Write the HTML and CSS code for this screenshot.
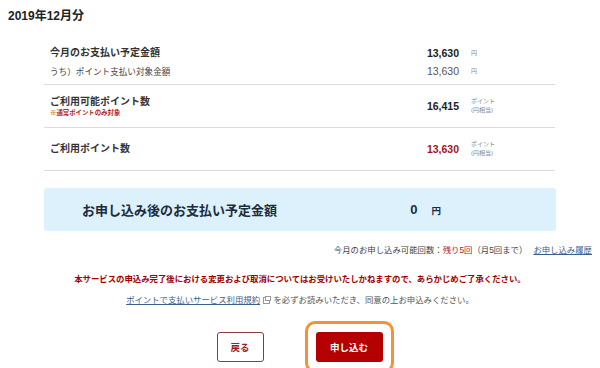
FILE: index.html
```html
<!DOCTYPE html>
<html lang="ja">
<head>
    <meta charset="UTF-8">
    <title>ポイントで支払い</title>
    <link rel="stylesheet" href="styles.css">
</head>
<body>
    <h1 class="month-title">2019年12月分</h1>

    <div class="summary">
        <div class="row row-first">
            <div class="label label-main">今月のお支払い予定金額</div>
            <div class="amount">13,630</div>
            <div class="unit">円</div>
            <div class="label label-sub">うち）ポイント支払い対象金額</div>
            <div class="amount amount-sub">13,630</div>
            <div class="unit">円</div>
        </div>
        <div class="row">
            <div class="label">
                <div class="label-main">ご利用可能ポイント数</div>
                <div class="label-note">※通常ポイントのみ対象</div>
            </div>
            <div class="amount">16,415</div>
            <div class="unit">ポイント<br>(円相当)</div>
        </div>
        <div class="row">
            <div class="label label-main">ご利用ポイント数</div>
            <div class="amount amount-red">13,630</div>
            <div class="unit">ポイント<br>(円相当)</div>
        </div>
    </div>

    <div class="after-box">
        <div class="after-label">お申し込み後のお支払い予定金額</div>
        <div class="after-amount">0</div>
        <div class="after-unit">円</div>
    </div>

    <p class="count-line">今月のお申し込み可能回数：<span class="count-red">残り5回</span>（月5回まで）<a href="#" class="link">お申し込み履歴</a></p>

    <p class="warning">本サービスの申込み完了後における変更および取消についてはお受けいたしかねますので、あらかじめご了承ください。</p>

    <p class="terms"><a href="#" class="link">ポイントで支払いサービス利用規約</a><svg class="win-icon" width="8" height="8" viewBox="0 0 8 8"><rect x="0.5" y="1.5" width="6" height="6" fill="none" stroke="#999" stroke-width="1"/><rect x="2.5" y="0.5" width="5" height="4" fill="#fff" stroke="#999" stroke-width="1"/></svg> を必ずお読みいただき、同意の上お申込みください。</p>

    <div class="buttons">
        <button class="btn btn-back">戻る</button>
        <div class="focus-ring">
            <button class="btn btn-apply">申し込む</button>
        </div>
    </div>
</body>
</html>
```

FILE: styles.css
```css
body {
    margin: 0;
    font-family: "Liberation Sans", "Noto Sans CJK JP", sans-serif;
    color: #333;
    background-color: #fff;
    overflow: hidden;
}
.month-title {
    margin: 0;
    padding: 8px 8px 0;
    font-size: 12px;
    line-height: 16px;
    font-weight: bold;
    color: #222;
}
.summary {
    margin: 20px 45px 0 44px;
}
.row {
    display: grid;
    grid-template-columns: 1fr auto 84px;
    column-gap: 12px;
    align-items: center;
    min-height: 42px;
    border-bottom: 1px solid #dcdcdc;
    padding-left: 6px;
}
.row-first {
    grid-auto-rows: 18px;
    min-height: 0;
    padding-bottom: 4px;
}
.label-main {
    font-size: 10px;
    line-height: 12px;
    font-weight: bold;
    color: #333;
}
.label-sub {
    font-size: 8.6px;
    color: #444;
}
.label-note {
    font-size: 6.4px;
    line-height: 9px;
    font-weight: bold;
    color: #b31b1b;
}
.amount {
    text-align: right;
    font-size: 10.5px;
    font-weight: bold;
    color: #222;
}
.amount-sub {
    font-weight: normal;
    color: #555;
}
.amount-red {
    color: #a3141b;
}
.unit {
    font-size: 6px;
    line-height: 9px;
    color: #888;
}
.after-box {
    display: flex;
    align-items: center;
    height: 43px;
    margin: 17px 44px 0 44px;
    padding: 0 115px 0 38px;
    background-color: #dcf1fb;
    border-radius: 3px;
    color: #1c2b3d;
    font-weight: bold;
}
.after-label {
    flex: 1;
    font-size: 13px;
}
.after-amount {
    font-size: 13px;
}
.after-unit {
    font-size: 9.5px;
    margin-left: 14px;
}
.count-line {
    margin: 13px 8px 0 0;
    text-align: right;
    font-size: 8.4px;
    line-height: 12px;
    color: #444;
}
.count-red {
    color: #b31b1b;
}
.count-line .link {
    margin-left: 6px;
}
.link {
    color: #3a5f8f;
    text-decoration: underline;
}
.warning {
    margin: 17px 0 0;
    text-align: center;
    font-size: 8.4px;
    line-height: 12px;
    font-weight: bold;
    color: #a00000;
}
.terms {
    margin: 9px 0 0;
    text-align: center;
    font-size: 8.4px;
    line-height: 12px;
    color: #555;
}
.win-icon {
    margin-left: 3px;
    vertical-align: -1px;
}
.buttons {
    display: flex;
    justify-content: center;
    align-items: center;
    gap: 41px;
    margin-top: 15px;
    padding-left: 10px;
}
.btn {
    height: 30px;
    border-radius: 3px;
    font-family: "Liberation Sans", "Noto Sans CJK JP", sans-serif;
    font-size: 9.5px;
    font-weight: bold;
    cursor: pointer;
}
.btn-back {
    width: 47px;
    background-color: #fff;
    border: 1px solid #8c3a3a;
    color: #a01e1e;
}
.btn-apply {
    display: block;
    width: 67px;
    background-color: #b40000;
    border: none;
    color: #fff;
}
.focus-ring {
    padding: 8px;
    border: 3px solid #f4923a;
    border-radius: 10px;
}
```
